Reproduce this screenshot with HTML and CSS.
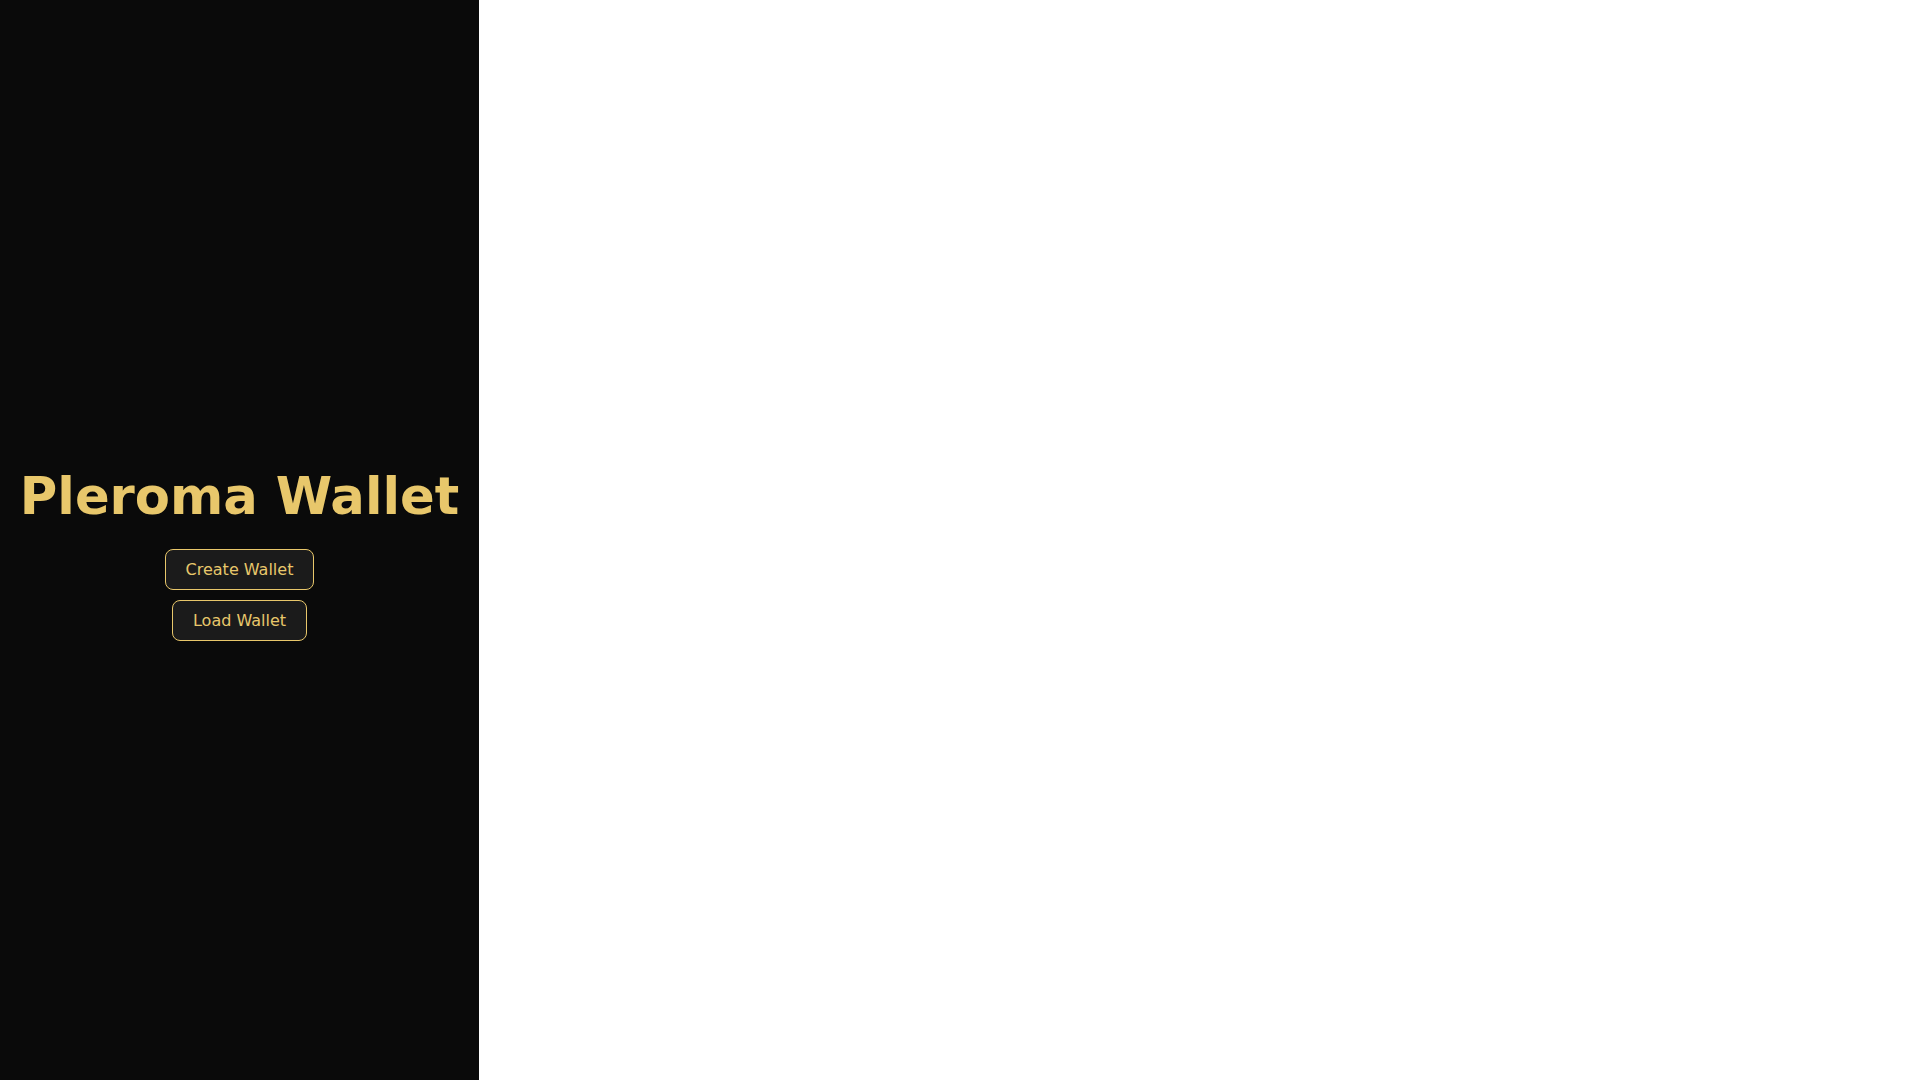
FILE: index.html
```html
<!DOCTYPE html>
<html lang="en">
<head>
<meta charset="utf-8">
<title>Pleroma Wallet</title>
<link rel="stylesheet" href="styles.css">
</head>
<body>
<div class="app">
  <aside class="sidebar">
    <div class="intro">
      <h1 class="title">Pleroma Wallet</h1>
      <button class="btn">Create Wallet</button>
      <button class="btn">Load Wallet</button>
    </div>
  </aside>
  <main class="content"></main>
</div>
</body>
</html>
```

FILE: styles.css
```css
html, body {
  margin: 0;
  padding: 0;
  height: 100%;
  background: #ffffff;
  font-family: "DejaVu Sans", sans-serif;
}

.app {
  display: flex;
  height: 100vh;
}

.sidebar {
  width: 479px;
  flex: 0 0 479px;
  background: #0a0a0a;
  display: flex;
  align-items: center;
  justify-content: center;
}

.intro {
  display: flex;
  flex-direction: column;
  align-items: center;
}

.title {
  margin: 26px 0 23px;
  font-size: 51.2px;
  font-weight: bold;
  line-height: 60px;
  color: #e8c76b;
  white-space: nowrap;
}

.btn {
  font-family: "DejaVu Sans", sans-serif;
  font-size: 16px;
  line-height: 19px;
  padding: 10px 20px;
  background: #1b1b1b;
  color: #e8c76b;
  border: 1px solid #e8c76b;
  border-radius: 8px;
  margin-bottom: 10px;
  cursor: pointer;
}

.btn:last-child {
  margin-bottom: 0;
}

.content {
  flex: 1;
  background: #ffffff;
}
```
